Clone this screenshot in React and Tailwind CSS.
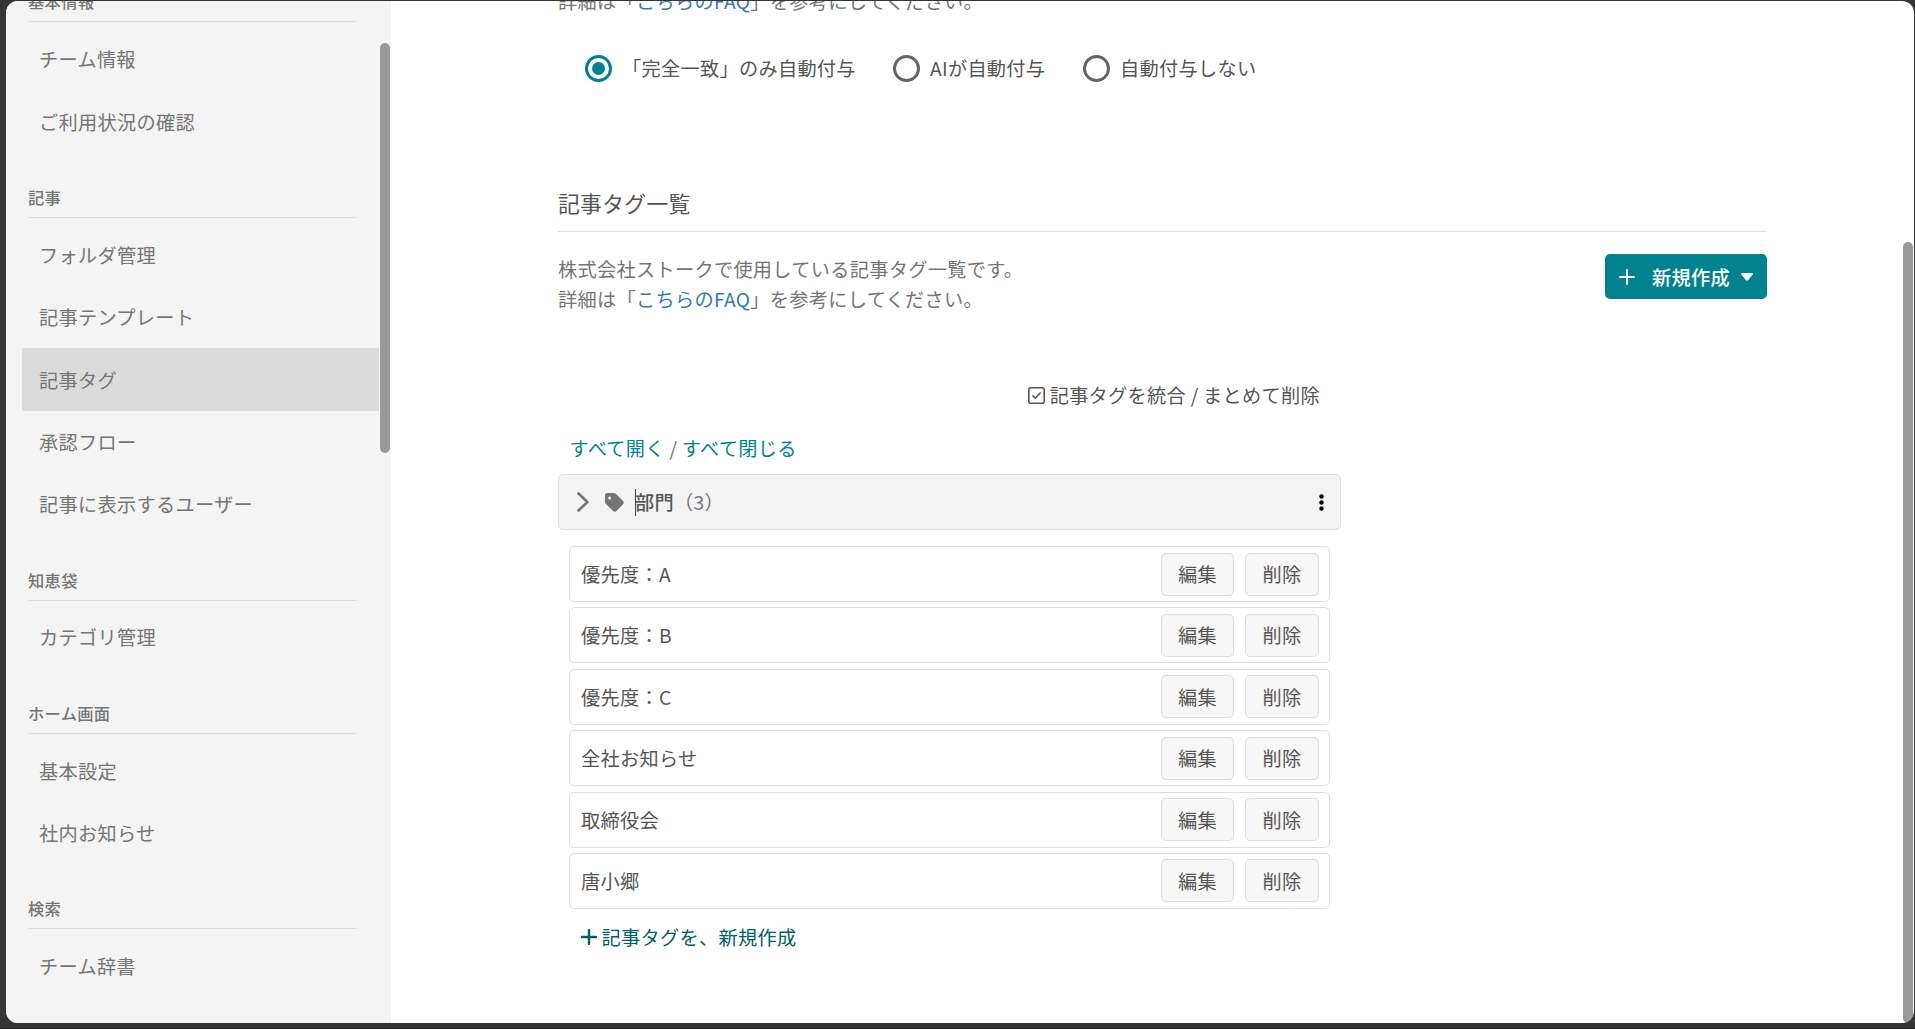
import { useState } from 'react';

const menuGroups = [
  { title: '基本情報', items: ['チーム情報', 'ご利用状況の確認'] },
  {
    title: '記事',
    items: ['フォルダ管理', '記事テンプレート', '記事タグ', '承認フロー', '記事に表示するユーザー'],
  },
  { title: '知恵袋', items: ['カテゴリ管理'] },
  { title: 'ホーム画面', items: ['基本設定', '社内お知らせ'] },
  { title: '検索', items: ['チーム辞書'] },
];

const assignOptions = [
  { id: 'exact', label: '「完全一致」のみ自動付与', className: 'w-[308px]' },
  { id: 'ai', label: 'AIが自動付与', className: 'w-[190px]' },
  { id: 'none', label: '自動付与しない', className: '' },
];

const tags = ['優先度：A', '優先度：B', '優先度：C', '全社お知らせ', '取締役会', '唐小郷'];

function PlusIcon({ width = 2, className = '' }) {
  return (
    <svg viewBox="0 0 16 16" className={`h-4 w-4 shrink-0 ${className}`} fill="none" stroke="currentColor" strokeWidth={width} strokeLinecap="round">
      <path d="M8 1v14M1 8h14" />
    </svg>
  );
}

function Sidebar() {
  const [active, setActive] = useState('記事タグ');

  return (
    <aside className="relative w-[385px] shrink-0 overflow-hidden bg-[#f4f4f4] text-[#757575]">
      <div className="-mt-[43.5px] pl-4">
        {menuGroups.map((group) => (
          <section key={group.title}>
            <h2 className="mb-[5.8px] ml-1.5 flex h-[64.9px] w-[329px] items-end border-b border-[#dedede] pb-2 text-[16.3px] leading-6 font-medium">
              {group.title}
            </h2>
            {group.items.map((item) => (
              <button
                key={item}
                onClick={() => setActive(item)}
                className={`flex h-[62.4px] w-[357px] items-center pl-[17px] text-left ${
                  active === item ? 'bg-[#dbdbdb]' : ''
                }`}
              >
                {item}
              </button>
            ))}
          </section>
        ))}
      </div>
      {/* Scrollbar thumb */}
      <div className="absolute top-[42px] right-px h-[410px] w-2.5 rounded-full bg-[#999]" />
    </aside>
  );
}

function FaqLine() {
  return (
    <>
      詳細は「
      <a href="#faq" className="text-[#337ab7]">こちらのFAQ</a>
      」を参考にしてください。
    </>
  );
}

function RowButton({ className, children }) {
  return (
    <button className={`h-[43px] rounded-[5px] border border-[#dedede] bg-[#f7f7f7] ${className}`}>
      {children}
    </button>
  );
}

function TagRow({ name }) {
  return (
    <li className="flex h-14 items-center gap-[11px] rounded-[5px] border border-[#dedede] bg-white pr-2.5 pl-[11px]">
      <span className="flex-1">{name}</span>
      <RowButton className="w-[73px]">編集</RowButton>
      <RowButton className="w-[74px]">削除</RowButton>
    </li>
  );
}

export default function App() {
  const [assign, setAssign] = useState('exact');

  return (
    <div className="h-[1029px] overflow-hidden border-b border-[#1e1e1e] bg-[#353535] pt-px pr-px pl-1.5 font-['Noto_Sans_CJK_JP',sans-serif] text-[19.2px] leading-[30px] tracking-[0.3px] text-[#555]">
      <div className="relative flex h-[1022px] overflow-hidden rounded-[12px] bg-white">
        <Sidebar />

        <main className="-mt-[15px] ml-[167px] w-[1209px]">
          <p className="text-[#757575]"><FaqLine /></p>

          {/* Auto tagging mode */}
          <div className="mt-[37px] ml-[27px] flex h-[30px] items-center">
            {assignOptions.map((option) => (
              <label key={option.id} className={`flex items-center gap-2.5 ${option.className}`}>
                <input
                  type="radio"
                  name="assign"
                  className="sr-only"
                  checked={assign === option.id}
                  onChange={() => setAssign(option.id)}
                />
                <span
                  className={`flex h-[27px] w-[27px] shrink-0 items-center justify-center rounded-full border-3 ${
                    assign === option.id ? 'border-[#00838f]' : 'border-[#666]'
                  }`}
                >
                  {assign === option.id && <span className="h-[13px] w-[13px] rounded-full bg-[#00838f]" />}
                </span>
                <span className="whitespace-nowrap">{option.label}</span>
              </label>
            ))}
          </div>

          <h1 className="mt-[105px] border-b border-[#dedede] pb-[13px] text-[21.8px] leading-[30px]">記事タグ一覧</h1>

          <div className="mt-[22px] flex items-start justify-between">
            <p className="text-[#757575]">
              株式会社ストークで使用している記事タグ一覧です。
              <br />
              <FaqLine />
            </p>
            <button className="flex h-[45px] w-[162px] items-center rounded-[5px] bg-[#00838f] pl-3.5 font-medium text-white">
              <PlusIcon width={2} />
              <span className="ml-[17px] whitespace-nowrap">新規作成</span>
              <svg viewBox="0 0 12 8" className="ml-[11px] h-2 w-3 shrink-0" fill="currentColor">
                <path d="M1 0h10c.9 0 1.300.9.7 1.600L7 7.200c-.6.600-1.400.600-2 0L.3 1.600C-.3.900.1 0 1 0z" />
              </svg>
            </button>
          </div>

          <div className="w-[783px]">
            <button className="mt-[66px] mr-[21px] ml-auto flex items-center gap-[5px]">
              <svg viewBox="0 0 17 17" className="h-[17px] w-[17px]" fill="none" stroke="currentColor" strokeWidth="1.6" strokeLinecap="round" strokeLinejoin="round">
                <rect x="0.8" y="0.8" width="15.4" height="15.4" rx="2" />
                <path d="M5 8.900l2.300 2.300L12.200 6" />
              </svg>
              記事タグを統合 / まとめて削除
            </button>

            <div className="mt-[23px] ml-[11.5px] text-[#757575]">
              <button className="text-[#00838f]">すべて開く</button>
              {' / '}
              <button className="text-[#00838f]">すべて閉じる</button>
            </div>

            {/* Tag group */}
            <div className="mt-[11px] flex h-14 items-center rounded-[5px] border border-[#dedede] bg-[#f3f3f3] pl-[18px] text-[#757575]">
              <svg viewBox="0 0 12 20" className="h-5 w-3" fill="none" stroke="currentColor" strokeWidth="2.6" strokeLinecap="round" strokeLinejoin="round">
                <path d="M1.500 1.500L10.400 10l-8.900 8.500" />
              </svg>
              <svg viewBox="0 0 19 19" className="ml-4 h-[19px] w-[19px]" fill="currentColor">
                <path fillRule="evenodd" d="M0 2.200C0 1 1 0 2.200 0H9c.7 0 1.300.2 1.800.7l7.200 7.200c1 1 1 2.400 0 3.400L11.500 18c-1 1-2.400 1-3.400 0L.7 10.700C.2 10.200 0 9.600 0 9V2.200zM4.700 3.400a1.500 1.500 0 1 0 0 3 1.500 1.500 0 0 0 0-3z" />
              </svg>
              <span className="ml-[11px] h-[27px] w-px bg-[#444]" />
              <span className="-ml-px font-medium text-[#555]">部門</span>
              <span>（3）</span>
              <svg viewBox="0 0 5 17" className="mr-4 ml-auto h-[17px] w-[5px] text-black" fill="currentColor">
                <circle cx="2.500" cy="2.500" r="2.200" />
                <circle cx="2.500" cy="8.500" r="2.200" />
                <circle cx="2.500" cy="14.500" r="2.200" />
              </svg>
            </div>

            <ul className="mt-4 mr-[11px] ml-[11px] flex flex-col gap-[5.4px]">
              {tags.map((tag) => (
                <TagRow key={tag} name={tag} />
              ))}
            </ul>

            <button className="mt-[13px] ml-[22.5px] flex items-center gap-[5px] text-[#006064]">
              <PlusIcon width={2.4} />
              記事タグを、新規作成
            </button>
          </div>
        </main>

        {/* Page scrollbar thumb */}
        <div className="absolute top-[241px] right-px h-[781px] w-2.5 rounded-full bg-[#999]" />
      </div>
    </div>
  );
}
